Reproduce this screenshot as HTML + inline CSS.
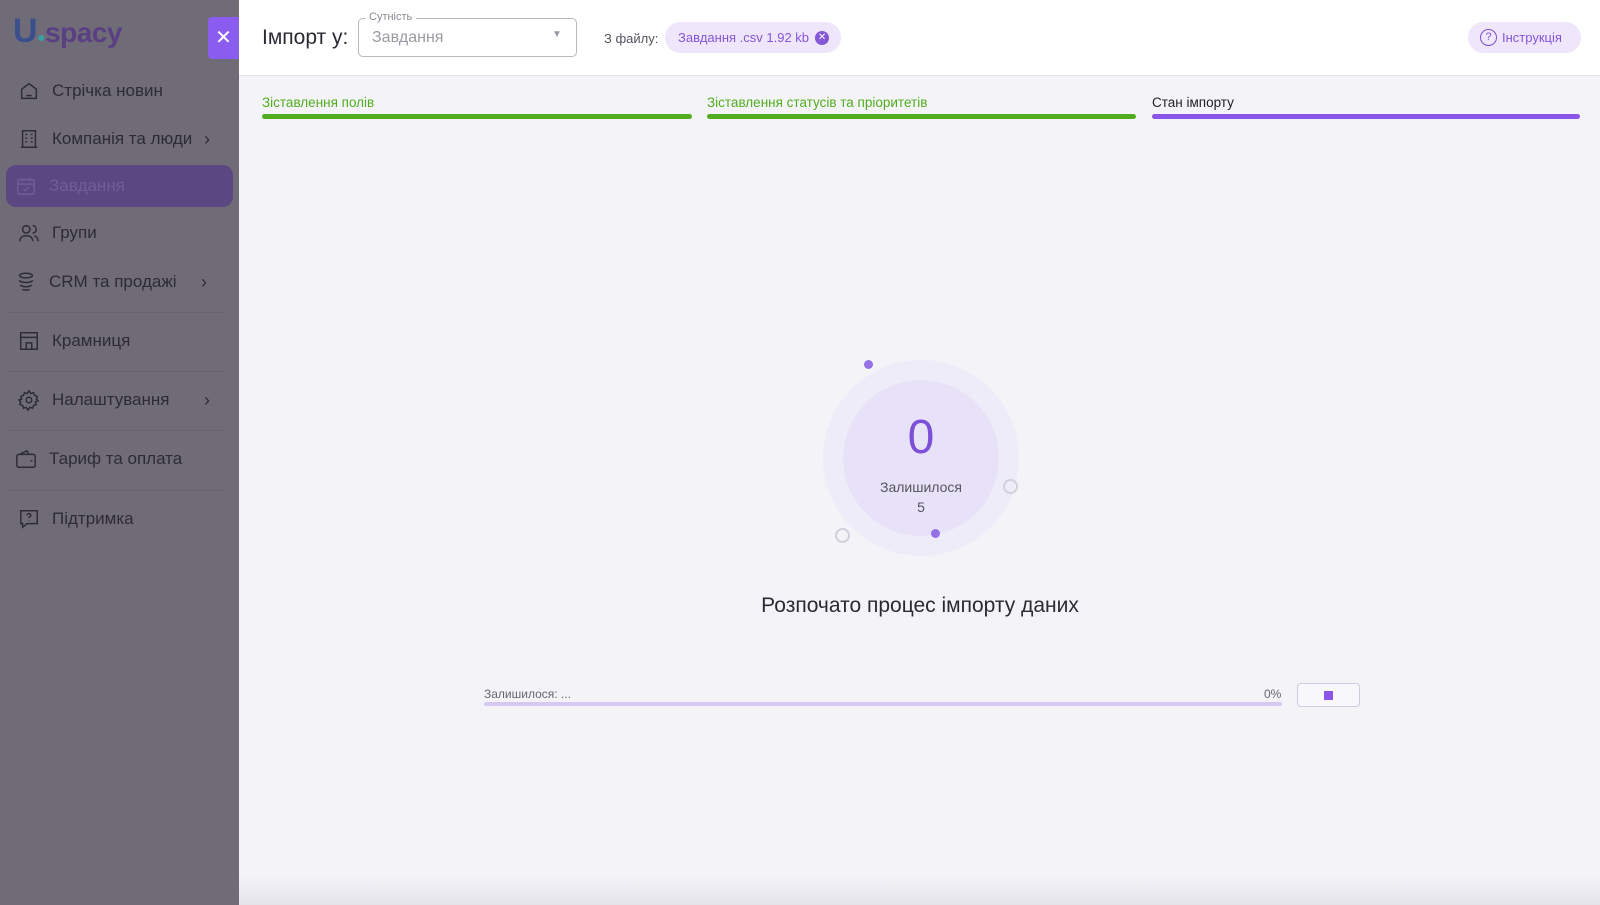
<!DOCTYPE html>
<html><head><meta charset="utf-8"><style>
*{box-sizing:border-box;margin:0;padding:0}
body{width:1600px;height:905px;overflow:hidden;background:#f3f3f8;font-family:"Liberation Sans",sans-serif;position:relative}
.sb{position:absolute;left:0;top:0;width:239px;height:905px;background:#6f6c77}
.logo{position:absolute;left:13px;top:12px;font-size:28px;font-weight:bold;color:#5a3f84;letter-spacing:-0.5px}
.logo .u{color:#3b4f8f;font-size:34px}
.close{position:absolute;left:208px;top:17px;width:31px;height:42px;background:#8a5cf0;color:#fff;font-size:20px;text-align:center;line-height:42px;border-radius:4px 0 0 4px}
.mi{position:absolute;left:18px;font-size:17px;color:#2d2b36;display:flex;align-items:center;gap:12px;width:200px}
.mi svg{width:22px;height:22px;stroke:#2d2b36;fill:none;stroke-width:1.6;flex:none}
.mi .ar{position:absolute;left:186px;color:#2d2b36;font-size:18px}
.act{position:absolute;left:6px;top:165px;width:227px;height:42px;background:#5b4883;border-radius:10px}
.dv{position:absolute;left:8px;width:215px;height:1px;background:#67646f}
.hd{position:absolute;left:239px;top:0;right:0;height:76px;background:#fff;border-bottom:1px solid #e2e2ea}
.tab{position:absolute;top:95px;font-size:13.5px}
.bar{position:absolute;top:114px;height:5px;border-radius:3px}
</style></head><body>
<div class="sb">
<div class="logo"><span class="u">U</span><span style="color:#3aa0a8;font-size:14px">●</span>spacy</div>
<div class="close">✕</div>
<div class="act"></div>
<div class="mi" style="top:80px"><svg viewBox="0 0 24 24"><path d="M4 10l8-6 8 6v10H4z"/><path d="M9 17h6"/></svg>Стрічка новин</div>
<div class="mi" style="top:128px"><svg viewBox="0 0 24 24"><path d="M5 3h14v18H5z"/><path d="M8 7h2M14 7h2M8 11h2M14 11h2M8 15h2M14 15h2M3 21h18"/></svg>Компанія та люди<span class="ar">›</span></div>
<div class="mi" style="top:175px;left:15px;color:#6f5e98"><svg viewBox="0 0 24 24" style="stroke:#6f5e98"><rect x="3" y="5" width="18" height="16" rx="2"/><path d="M3 10h18M8 3v4M16 3v4M9 15l2 2 4-4"/></svg>Завдання</div>
<div class="mi" style="top:222px"><svg viewBox="0 0 24 24"><circle cx="9" cy="8" r="4"/><path d="M2 21c0-4 3-6 7-6s7 2 7 6M16 4a4 4 0 010 8M18 15c2 1 4 3 4 6"/></svg>Групи</div>
<div class="mi" style="top:271px;left:15px"><svg viewBox="0 0 24 24"><ellipse cx="12" cy="5" rx="7" ry="2.5"/><path d="M5 10c0 1.5 3 2.5 7 2.5s7-1 7-2.5M6 15c0 1.3 3 2.2 6 2.2s6-.9 6-2.2M8 20c1 1 7 1 8 0"/></svg>CRM та продажі<span class="ar">›</span></div>
<div class="dv" style="top:312px"></div>
<div class="mi" style="top:330px"><svg viewBox="0 0 24 24"><rect x="3" y="3" width="18" height="18"/><path d="M3 8h18M9 21v-7h6v7"/></svg>Крамниця</div>
<div class="dv" style="top:371px"></div>
<div class="mi" style="top:389px"><svg viewBox="0 0 24 24"><circle cx="12" cy="12" r="3"/><path d="M12 2l2 3 3-1 1 3 3 1-1 3 2 2-3 1 1 3-3 1-1 3-3-1-2 3-2-3-3 1-1-3-3-1 1-3-2-2 3-1-1-3 3-1 1-3 3 1z"/></svg>Налаштування<span class="ar">›</span></div>
<div class="dv" style="top:430px"></div>
<div class="mi" style="top:448px;left:15px"><svg viewBox="0 0 24 24"><rect x="2" y="7" width="20" height="14" rx="2"/><path d="M5 7l8-4 2 4M17 14h2"/></svg>Тариф та оплата</div>
<div class="dv" style="top:490px"></div>
<div class="mi" style="top:508px"><svg viewBox="0 0 24 24"><path d="M3 3h18v14H10l-5 4v-4H3z"/><path d="M10 8a2 2 0 114 0c0 1.5-2 1.5-2 3M12 13.5v.5"/></svg>Підтримка</div>
</div>
<div class="hd">
<div style="position:absolute;left:23px;top:26px;font-size:21px;color:#2a2a33">Імпорт у:</div>
<div style="position:absolute;left:119px;top:18px;width:219px;height:39px;border:1px solid #b8b8c0;border-radius:5px"></div>
<div style="position:absolute;left:126px;top:11px;font-size:11px;color:#8a8a94;background:#fff;padding:0 4px">Сутність</div>
<div style="position:absolute;left:133px;top:29px;font-size:16px;color:#9a9aa2">Завдання</div>
<div style="position:absolute;left:313px;top:29px;font-size:10px;color:#9a9aa2">▼</div>
<div style="position:absolute;left:365px;top:31px;font-size:13px;color:#55555f">З файлу:</div>
<div style="position:absolute;left:426px;top:22px;width:176px;height:31px;background:#efe6fb;border-radius:16px;font-size:13px;color:#8456d8;line-height:31px;padding-left:13px;display:flex;align-items:center">Завдання .csv 1.92 kb <span style="display:inline-block;width:14px;height:14px;border-radius:50%;background:#8456d8;color:#fff;font-size:10px;line-height:14px;text-align:center;margin-left:6px">✕</span></div>
<div style="position:absolute;right:19px;top:22px;width:113px;height:31px;background:#efe6fb;border-radius:16px;font-size:13px;color:#8456d8;padding-left:12px;display:flex;align-items:center"><span style="display:inline-block;width:17px;height:17px;border:1.5px solid #7d4fd0;border-radius:50%;font-size:11px;line-height:14px;text-align:center;margin-right:5px">?</span>Інструкція</div>
</div>
<div class="tab" style="left:262px;color:#52ad1e">Зіставлення полів</div>
<div class="bar" style="left:262px;width:430px;background:#52ad1e"></div>
<div class="tab" style="left:707px;color:#52ad1e">Зіставлення статусів та пріоритетів</div>
<div class="bar" style="left:707px;width:429px;background:#52ad1e"></div>
<div class="tab" style="left:1152px;color:#222">Стан імпорту</div>
<div class="bar" style="left:1152px;width:428px;background:#8a55e8"></div>
<div style="position:absolute;left:823px;top:360px;width:196px;height:196px;border-radius:50%;background:#eeecf8"></div>
<div style="position:absolute;left:843px;top:380px;width:156px;height:156px;border-radius:50%;background:#e8e2f8"></div>
<div style="position:absolute;left:821px;top:410px;width:200px;text-align:center;font-size:48px;color:#7c4fd8">0</div>
<div style="position:absolute;left:821px;top:479px;width:200px;text-align:center;font-size:14px;color:#55555f">Залишилося</div>
<div style="position:absolute;left:821px;top:499px;width:200px;text-align:center;font-size:14px;color:#55555f">5</div>
<div style="position:absolute;left:864px;top:360px;width:9px;height:9px;border-radius:50%;background:#9670e6"></div>
<div style="position:absolute;left:931px;top:529px;width:9px;height:9px;border-radius:50%;background:#9670e6"></div>
<div style="position:absolute;left:1003px;top:479px;width:15px;height:15px;border-radius:50%;border:2px solid #d2d0da"></div>
<div style="position:absolute;left:835px;top:528px;width:15px;height:15px;border-radius:50%;border:2px solid #d2d0da"></div>
<div style="position:absolute;left:570px;top:594px;width:700px;text-align:center;font-size:21px;color:#2a2a33">Розпочато процес імпорту даних</div>
<div style="position:absolute;left:484px;top:687px;font-size:12px;color:#66666f">Залишилося: ...</div>
<div style="position:absolute;left:1264px;top:687px;font-size:12px;color:#66666f">0%</div>
<div style="position:absolute;left:484px;top:702px;width:798px;height:4px;border-radius:2px;background:#d6c8f2"></div>
<div style="position:absolute;left:1297px;top:683px;width:63px;height:24px;border:1px solid #cfcbe0;border-radius:4px;background:#f8f7fc"></div>
<div style="position:absolute;left:1324px;top:691px;width:9px;height:9px;background:#8a55e8"></div>
<div style="position:absolute;left:239px;right:0;top:875px;height:30px;background:linear-gradient(#f3f3f800,#e4e4ea)"></div>
</body></html>
